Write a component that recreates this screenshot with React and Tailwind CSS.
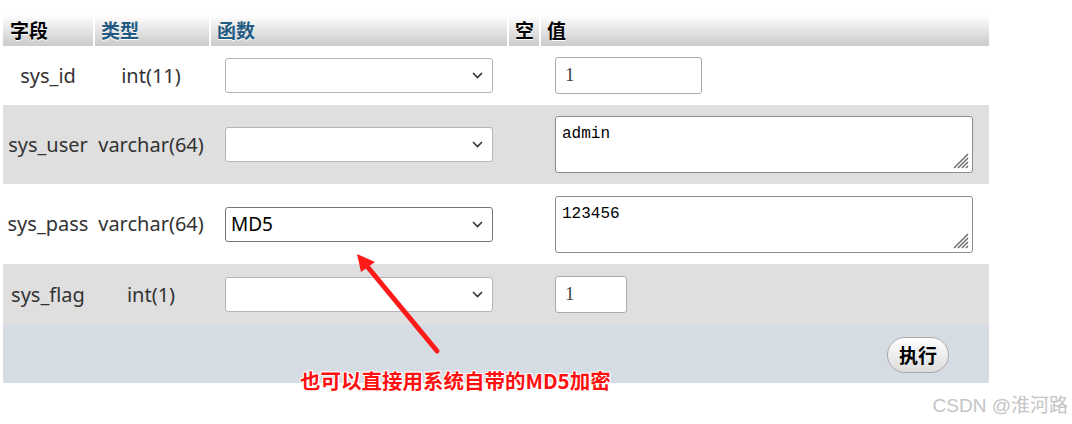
import React from 'react';

const cols = 'grid grid-cols-[90px_116px_298px_32px_450px]';
const body = "font-['Noto_Sans','Noto_Sans_CJK_SC',sans-serif] text-[20px] text-[#333]";

const rows = [
  { field: 'sys_id', type: 'int(11)', fn: '', value: '1', kind: 'input', w: 'w-[147px]', h: 'h-[59px]', bg: 'bg-white' },
  { field: 'sys_user', type: 'varchar(64)', fn: '', value: 'admin', kind: 'text', h: 'h-[79px]', bg: 'bg-[#dfdfdf]' },
  { field: 'sys_pass', type: 'varchar(64)', fn: 'MD5', value: '123456', kind: 'text', h: 'h-[80px]', bg: 'bg-white' },
  { field: 'sys_flag', type: 'int(1)', fn: '', value: '1', kind: 'input', w: 'w-[72px]', h: 'h-[61px]', bg: 'bg-[#dfdfdf]' },
];

function Chevron() {
  return (
    <svg width="11" height="7" viewBox="0 0 11 7" fill="none">
      <path d="M1 1l4.5 4.5L10 1" stroke="#333" strokeWidth="1.6" />
    </svg>
  );
}

function Select({ value }) {
  return (
    <div className={`w-[268px] h-[35px] bg-white rounded-[3px] border flex items-center justify-between pl-[5px] pr-[9px] text-[19px] ${value ? 'border-[#767676]' : 'border-[#b5b5b5]'}`}>
      <span className="text-black">{value}</span>
      <Chevron />
    </div>
  );
}

function Grip() {
  return (
    <svg className="absolute right-[3px] bottom-[3px]" width="16" height="16" viewBox="0 0 16 16" fill="none" stroke="#6f6f6f" strokeWidth="1.5">
      <path d="M1 15L15 1M5 15L15 5M9 15L15 9M13 15L15 13" />
    </svg>
  );
}

function HeadCell({ children, blue, first }) {
  return (
    <div className={`h-full flex items-center ${first ? 'pl-[7px]' : 'border-l-2 border-white pl-[6px]'} ${blue ? 'text-[#235a81]' : 'text-black'} [text-shadow:0_1px_0_#fff]`}>
      {children}
    </div>
  );
}

export default function App() {
  return (
    <div className="relative w-[1072px] h-[424px] bg-white overflow-hidden">
      <div className="ml-[3px] pt-[15px] w-[986px]">
        <div className={`${cols} h-[31px] bg-gradient-to-b from-white to-[#cbcbcb] font-['Noto_Sans_CJK_SC',sans-serif] font-bold text-[19px]`}>
          <HeadCell first>字段</HeadCell>
          <HeadCell blue>类型</HeadCell>
          <HeadCell blue>函数</HeadCell>
          <HeadCell>空</HeadCell>
          <HeadCell>值</HeadCell>
        </div>

        {rows.map((r) => (
          <div key={r.field} className={`${cols} ${r.h} ${r.bg} ${body} items-center`}>
            <div className="text-center">{r.field}</div>
            <div className="text-center">{r.type}</div>
            <div className="pl-[16px]"><Select value={r.fn} /></div>
            <div />
            <div className="pl-[16px]">
              {r.kind === 'input' ? (
                <div className={`${r.w} h-[37px] bg-white border border-[#aaa] rounded-[3px] flex items-center pl-[9px] font-['Liberation_Serif',serif] text-[19px] text-[#444]`}>
                  {r.value}
                </div>
              ) : (
                <div className="relative w-[418px] h-[57px] bg-white border border-[#8c8c99] rounded-[3px] px-[6px] pt-[7px] font-['Liberation_Mono',monospace] text-[16px] leading-[20px] text-black">
                  {r.value}
                  <Grip />
                </div>
              )}
            </div>
          </div>
        ))}

        <div className="h-[58px] bg-[#d5dce3] flex justify-end items-start pt-[12px] pr-[40px]">
          <button className="w-[62px] h-[36px] rounded-full border border-[#aaa] bg-gradient-to-b from-white to-[#dcdcdc] font-['Noto_Sans_CJK_SC',sans-serif] font-bold text-[19px] text-black">
            执行
          </button>
        </div>
      </div>

      <svg className="absolute left-0 top-0 pointer-events-none" width="1072" height="424">
        <line x1="437" y1="351" x2="366" y2="265" stroke="#ff1a1a" strokeWidth="5" strokeLinecap="round" />
        <polygon points="357,254 375,262 361,272" fill="#ff1a1a" />
      </svg>

      <div className="absolute left-[300px] top-[367px] font-['Noto_Sans_CJK_SC',sans-serif] font-bold text-[20.5px] leading-[26px] text-[#ff1010] [text-shadow:1px_1px_0_#fff,-1px_-1px_0_#fff,1px_-1px_0_#fff,-1px_1px_0_#fff]">
        也可以直接用系统自带的MD5加密
      </div>

      <div className="absolute right-[4px] top-[394px] font-['Liberation_Sans','Noto_Sans_CJK_SC',sans-serif] text-[19px] leading-[24px] text-[#c4c4c4]">
        CSDN @淮河路
      </div>
    </div>
  );
}
